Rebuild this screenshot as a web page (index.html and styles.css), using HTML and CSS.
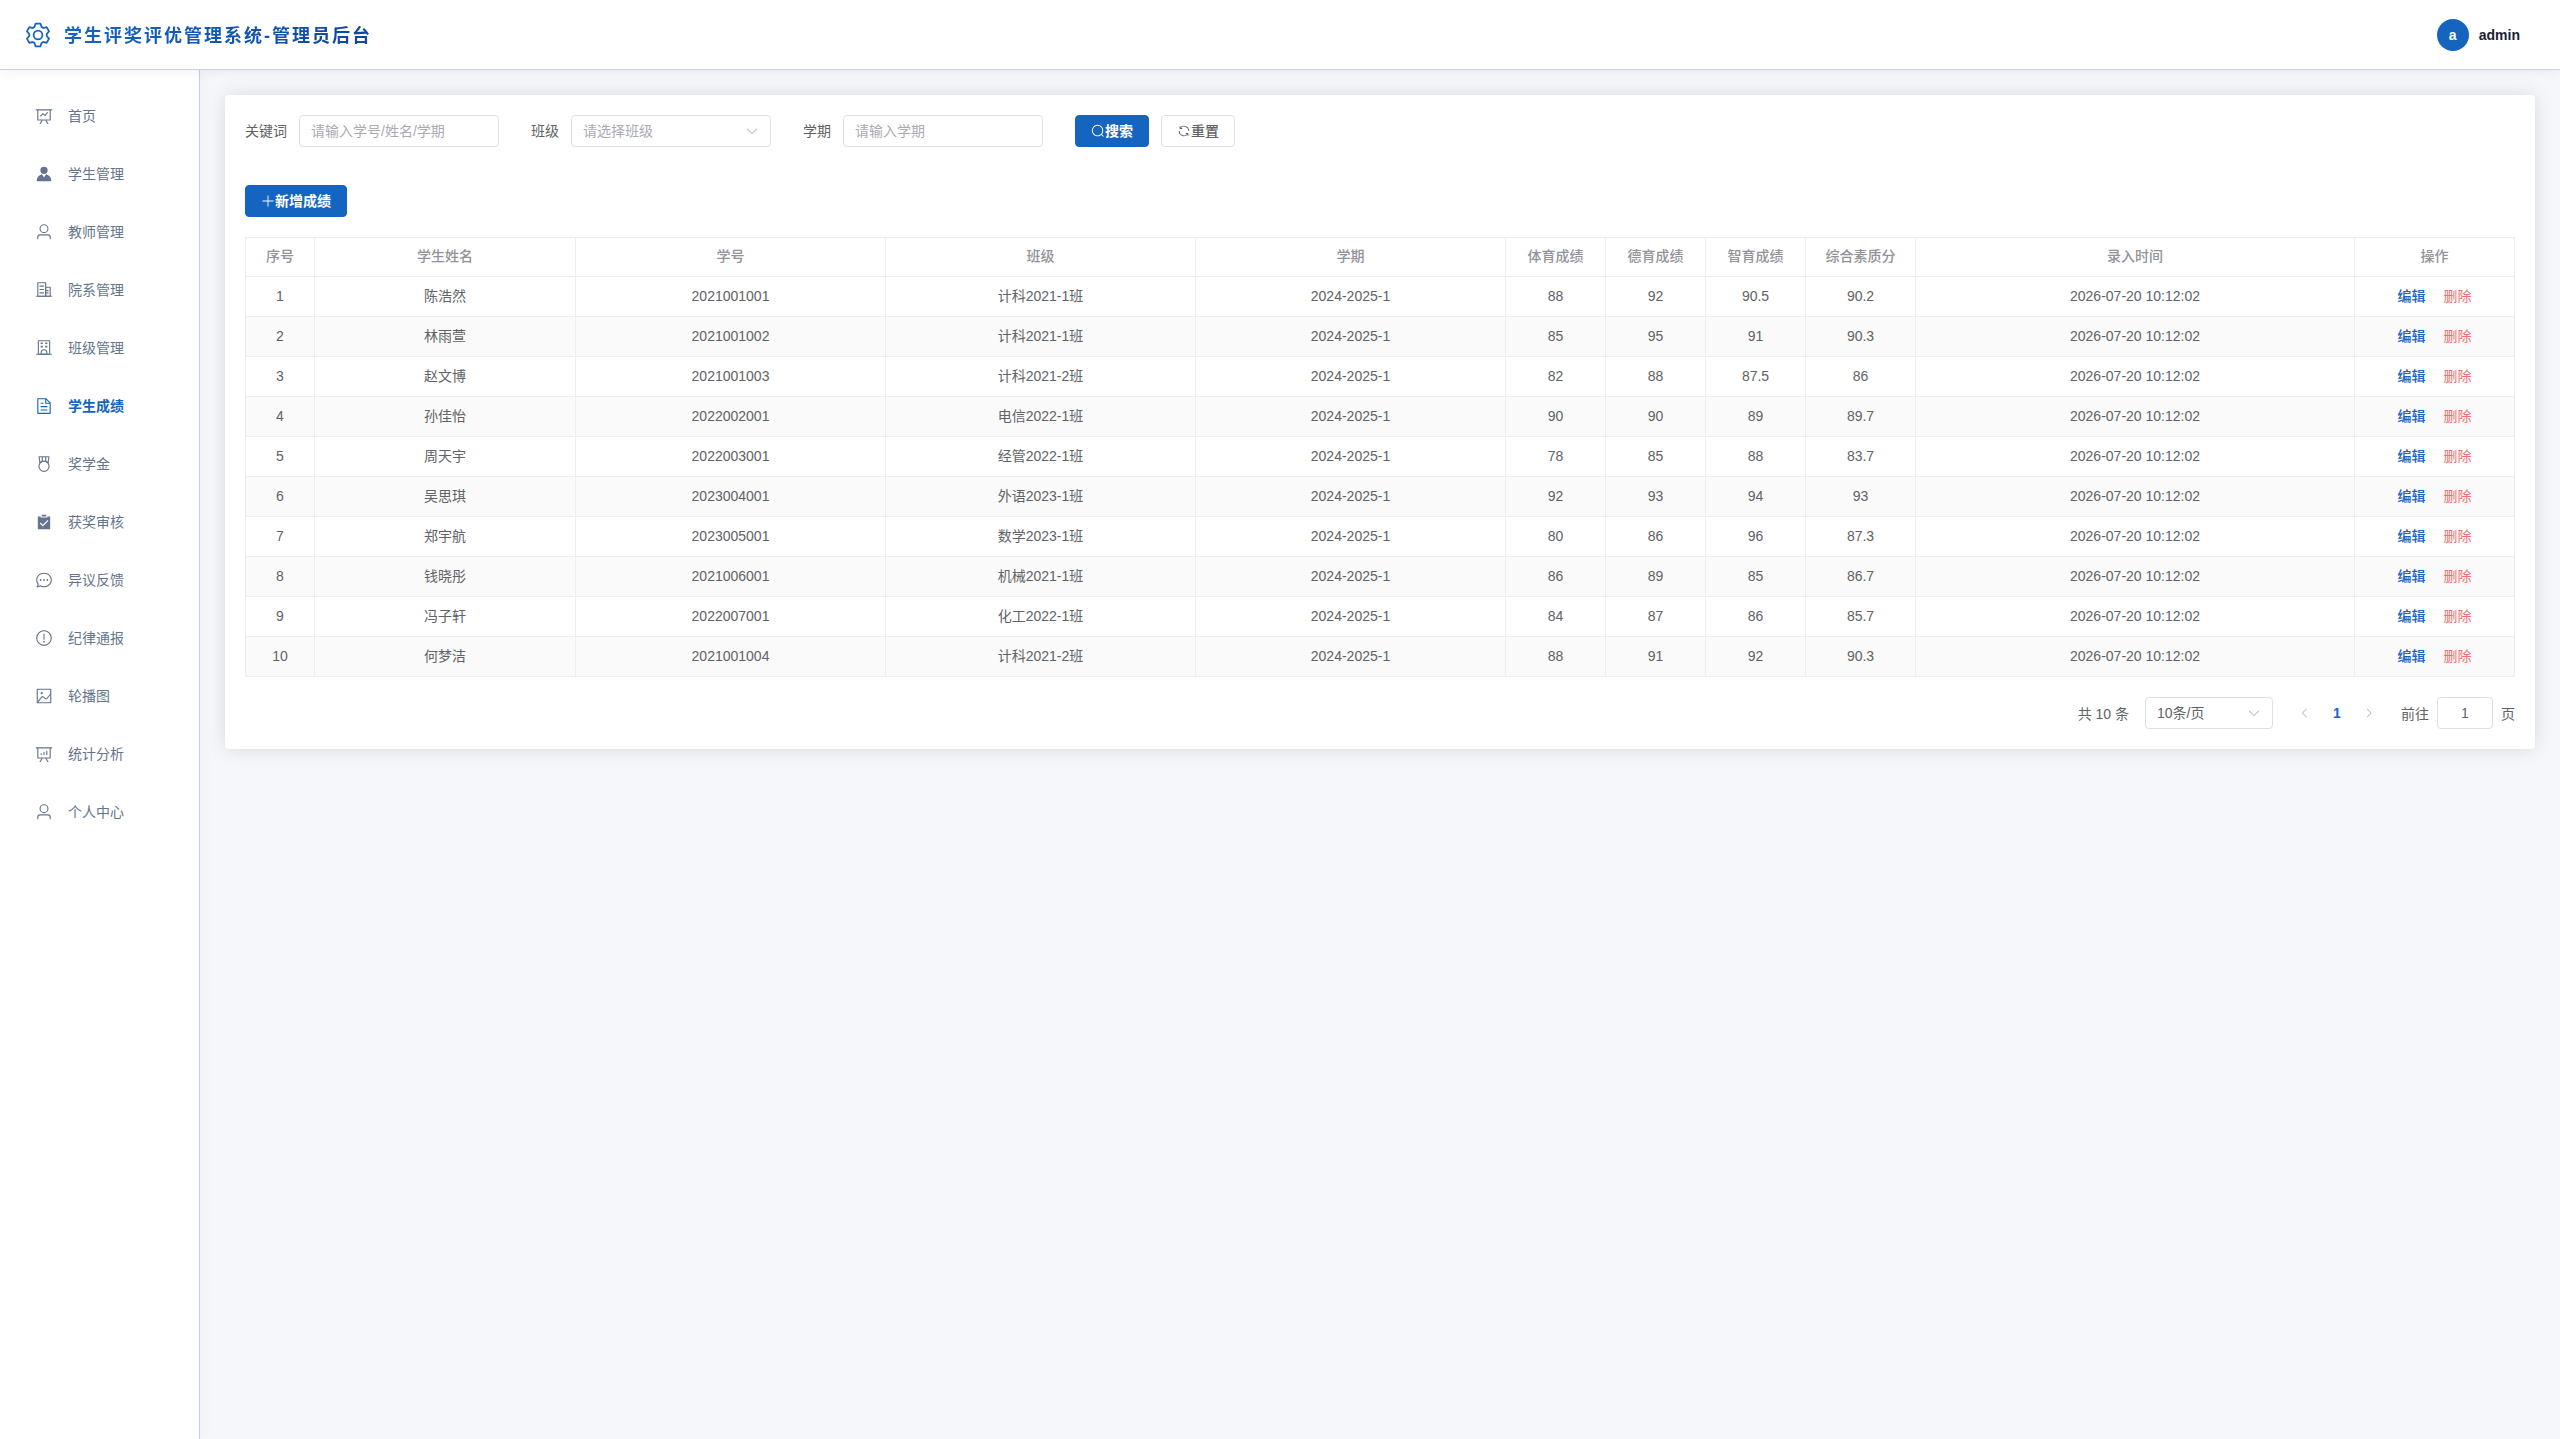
FILE: index.html
```html
<!DOCTYPE html>
<html lang="zh-CN">
<head>
<meta charset="UTF-8">
<title>学生评奖评优管理系统</title>
<link rel="stylesheet" href="styles.css">
</head>
<body>
<header class="header">
  <div class="brand">
    <svg class="brand-icon" viewBox="0 0 1024 1024"><path d="M600.704 64a32 32 0 0 1 30.464 22.208l35.2 109.376c14.784 7.232 28.928 15.36 42.432 24.512l112.384-24.192a32 32 0 0 1 34.432 15.36L944.32 364.8a32 32 0 0 1-4.032 37.504l-77.12 85.12a357.12 357.12 0 0 1 0 49.024l77.12 85.248a32 32 0 0 1 4.032 37.504l-88.704 153.6a32 32 0 0 1-34.432 15.296L708.8 803.904c-13.44 9.088-27.648 17.28-42.368 24.512l-35.264 109.376A32 32 0 0 1 600.704 960H423.296a32 32 0 0 1-30.464-22.208L357.696 828.48a351.616 351.616 0 0 1-42.56-24.64l-112.32 24.256a32 32 0 0 1-34.432-15.36L79.68 659.2a32 32 0 0 1 4.032-37.504l77.12-85.248a357.12 357.12 0 0 1 0-48.896l-77.12-85.248A32 32 0 0 1 79.68 364.8l88.704-153.6a32 32 0 0 1 34.432-15.296l112.32 24.256c13.568-9.152 27.776-17.408 42.56-24.64l35.2-109.312A32 32 0 0 1 423.232 64H600.64zm-23.424 64H446.72l-36.352 113.088-24.512 11.968a294.113 294.113 0 0 0-34.816 20.096l-22.656 15.36-116.224-25.088-65.28 113.152 79.68 88.192-1.92 27.136a293.12 293.12 0 0 0 0 40.192l1.92 27.136-79.808 88.192 65.344 113.152 116.224-25.024 22.656 15.296a294.113 294.113 0 0 0 34.816 20.096l24.512 11.968L446.72 896h130.688l36.48-113.152 24.448-11.904a288.282 288.282 0 0 0 34.752-20.096l22.592-15.296 116.288 25.024 65.28-113.152-79.744-88.192 1.92-27.136a293.12 293.12 0 0 0 0-40.256l-1.92-27.136 79.808-88.128-65.344-113.152-116.288 24.96-22.592-15.232a287.616 287.616 0 0 0-34.752-20.096l-24.448-11.904L577.344 128zM512 320a192 192 0 1 1 0 384 192 192 0 0 1 0-384m0 64a128 128 0 1 0 0 256 128 128 0 0 0 0-256"/></svg>
    <h1 class="brand-title">学生评奖评优管理系统-管理员后台</h1>
  </div>
  <div class="account">
    <span class="avatar">a</span>
    <span class="account-name">admin</span>
  </div>
</header>
<div class="layout">
  <aside class="sidebar">
    <nav class="menu">
      <a class="menu-item"><svg class="menu-icon" viewBox="0 0 1024 1024"><path d="M359.168 768H160a32 32 0 0 1-32-32V192H64a32 32 0 0 1 0-64h896a32 32 0 1 1 0 64h-64v544a32 32 0 0 1-32 32H665.216l110.848 192h-73.856L591.36 768H433.024L322.176 960H248.32zM832 192H192v512h640zM342.656 534.656a32 32 0 1 1-45.312-45.312L444.992 341.76l125.44 94.08L679.04 300.032a32 32 0 1 1 49.92 39.936L581.632 524.224 451.008 426.24 342.656 534.592z"/></svg><span>首页</span></a>
      <a class="menu-item"><svg class="menu-icon" viewBox="0 0 1024 1024"><path d="M628.736 528.896A416 416 0 0 1 928 928H96a415.872 415.872 0 0 1 299.264-399.104L512 704zM720 304a208 208 0 1 1-416 0 208 208 0 0 1 416 0"/></svg><span>学生管理</span></a>
      <a class="menu-item"><svg class="menu-icon" viewBox="0 0 1024 1024"><path d="M512 512a192 192 0 1 0 0-384 192 192 0 0 0 0 384m0 64a256 256 0 1 1 0-512 256 256 0 0 1 0 512m320 320v-96a96 96 0 0 0-96-96H288a96 96 0 0 0-96 96v96a32 32 0 1 1-64 0v-96a160 160 0 0 1 160-160h448a160 160 0 0 1 160 160v96a32 32 0 1 1-64 0"/></svg><span>教师管理</span></a>
      <a class="menu-item"><svg class="menu-icon" viewBox="0 0 1024 1024"><path d="M192 128v704h384V128zm-32-64h448a32 32 0 0 1 32 32v768a32 32 0 0 1-32 32H160a32 32 0 0 1-32-32V96a32 32 0 0 1 32-32"/><path d="M256 256h256v64H256zm0 192h256v64H256zm0 192h256v64H256zm384-128h128v64H640zm0 128h128v64H640zM64 832h896v64H64z"/><path d="M640 384v448h192V384zm-32-64h256a32 32 0 0 1 32 32v512a32 32 0 0 1-32 32H608a32 32 0 0 1-32-32V352a32 32 0 0 1 32-32"/></svg><span>院系管理</span></a>
      <a class="menu-item"><svg class="menu-icon" viewBox="0 0 1024 1024"><path d="M224 128v704h576V128zm-32-64h640a32 32 0 0 1 32 32v768a32 32 0 0 1-32 32H192a32 32 0 0 1-32-32V96a32 32 0 0 1 32-32"/><path d="M64 832h896v64H64zm256-640h128v96H320z"/><path d="M384 832h256v-64a128 128 0 1 0-256 0zm128-256a192 192 0 0 1 192 192v128H320V768a192 192 0 0 1 192-192M320 384h128v96H320zm256-192h128v96H576zm0 192h128v96H576z"/></svg><span>班级管理</span></a>
      <a class="menu-item active"><svg class="menu-icon" viewBox="0 0 1024 1024"><path d="M832 384H576V128H192v768h640zm-26.496-64L640 154.496V320zM160 64h480l256 256v608a32 32 0 0 1-32 32H160a32 32 0 0 1-32-32V96a32 32 0 0 1 32-32m160 448h384v64H320zm0-192h160v64H320zm0 384h384v64H320z"/></svg><span>学生成绩</span></a>
      <a class="menu-item"><svg class="menu-icon" viewBox="0 0 1024 1024"><path d="M512 896a256 256 0 1 0 0-512 256 256 0 0 0 0 512m0 64a320 320 0 1 1 0-640 320 320 0 0 1 0 640"/><path d="M576 128H448v200a286.72 286.72 0 0 1 64-8c19.52 0 40.832 2.688 64 8zm64 0v219.648c24.448 9.088 50.56 20.416 78.4 33.92L757.44 128zm-256 0H266.624l39.04 253.568c27.84-13.504 53.888-24.832 78.336-33.92V128zM229.312 64h565.376a32 32 0 0 1 31.616 36.864L768 480c-113.792-64-199.104-96-256-96-56.896 0-142.208 32-256 96l-58.304-379.136A32 32 0 0 1 229.312 64"/></svg><span>奖学金</span></a>
      <a class="menu-item"><svg class="menu-icon" viewBox="0 0 1024 1024"><path d="M704 192h160v736H160V192h160.064v64H704zM311.616 537.28l-45.312 45.248L447.36 763.52l316.8-316.8-45.312-45.184L447.36 673.024zM384 192V96h256v96z"/></svg><span>获奖审核</span></a>
      <a class="menu-item"><svg class="menu-icon" viewBox="0 0 1024 1024"><path d="m174.72 855.68 135.296-45.12 23.68 11.84C388.096 849.536 448.576 864 512 864c211.84 0 384-166.784 384-352S723.84 160 512 160 128 326.784 128 512c0 69.12 24.96 139.264 70.848 199.232l22.08 28.8-46.272 115.584zm-45.248 82.56A32 32 0 0 1 89.6 896l58.368-145.92C94.72 680.32 64 596.864 64 512 64 299.904 256 96 512 96s448 203.904 448 416-192 416-448 416a461.056 461.056 0 0 1-206.912-48.384l-175.616 58.56z"/><path d="M512 563.2a51.2 51.2 0 1 1 0-102.4 51.2 51.2 0 0 1 0 102.4m192 0a51.2 51.2 0 1 1 0-102.4 51.2 51.2 0 0 1 0 102.4m-384 0a51.2 51.2 0 1 1 0-102.4 51.2 51.2 0 0 1 0 102.4"/></svg><span>异议反馈</span></a>
      <a class="menu-item"><svg class="menu-icon" viewBox="0 0 1024 1024"><path d="M512 64a448 448 0 1 1 0 896 448 448 0 0 1 0-896m0 832a384 384 0 0 0 0-768 384 384 0 0 0 0 768m48-176a48 48 0 1 1-96 0 48 48 0 0 1 96 0m-48-464a32 32 0 0 1 32 32v288a32 32 0 0 1-64 0V288a32 32 0 0 1 32-32"/></svg><span>纪律通报</span></a>
      <a class="menu-item"><svg class="menu-icon" viewBox="0 0 1024 1024"><path d="M160 160v704h704V160zm-32-64h768a32 32 0 0 1 32 32v768a32 32 0 0 1-32 32H128a32 32 0 0 1-32-32V128a32 32 0 0 1 32-32"/><path d="M384 288q64 0 64 64t-64 64q-64 0-64-64t64-64M185.408 876.992l-50.816-38.912L350.72 556.032a96 96 0 0 1 134.592-17.856l1.856 1.472 122.88 99.136a32 32 0 0 0 44.992-4.864l216-269.888 49.92 39.936-215.808 269.824-.256.32a96 96 0 0 1-135.04 14.464l-122.88-99.072-.64-.512a32 32 0 0 0-44.8 5.952z"/></svg><span>轮播图</span></a>
      <a class="menu-item"><svg class="menu-icon" viewBox="0 0 1024 1024"><path d="m665.216 768 110.848 192h-73.856L591.36 768H433.024L322.176 960H248.32l110.848-192H160a32 32 0 0 1-32-32V192H64a32 32 0 0 1 0-64h896a32 32 0 1 1 0 64h-64v544a32 32 0 0 1-32 32zM832 192H192v512h640zM352 448a32 32 0 0 1 32 32v64a32 32 0 0 1-64 0v-64a32 32 0 0 1 32-32m160-64a32 32 0 0 1 32 32v128a32 32 0 0 1-64 0V416a32 32 0 0 1 32-32m160-64a32 32 0 0 1 32 32v192a32 32 0 1 1-64 0V352a32 32 0 0 1 32-32"/></svg><span>统计分析</span></a>
      <a class="menu-item"><svg class="menu-icon" viewBox="0 0 1024 1024"><path d="M512 512a192 192 0 1 0 0-384 192 192 0 0 0 0 384m0 64a256 256 0 1 1 0-512 256 256 0 0 1 0 512m320 320v-96a96 96 0 0 0-96-96H288a96 96 0 0 0-96 96v96a32 32 0 1 1-64 0v-96a160 160 0 0 1 160-160h448a160 160 0 0 1 160 160v96a32 32 0 1 1-64 0"/></svg><span>个人中心</span></a>
    </nav>
  </aside>
  <main class="main">
    <section class="card">
      <form class="filters">
        <label class="field">关键词<span class="control">请输入学号/姓名/学期</span></label>
        <label class="field">班级<span class="control">请选择班级<svg class="icon" viewBox="0 0 1024 1024"><path d="M831.872 340.864 512 652.672 192.128 340.864a30.592 30.592 0 0 0-42.752 0 29.12 29.12 0 0 0 0 41.6L489.664 714.24a32 32 0 0 0 44.672 0l340.288-331.712a29.12 29.12 0 0 0 0-41.728 30.592 30.592 0 0 0-42.752 0z"/></svg></span></label>
        <label class="field">学期<span class="control">请输入学期</span></label>
        <div class="actions">
          <button type="button" class="btn primary"><svg class="icon" viewBox="0 0 1024 1024"><path d="m795.904 750.72 124.992 124.928a32 32 0 0 1-45.248 45.248L750.656 795.904a416 416 0 1 1 45.248-45.248zM480 832a352 352 0 1 0 0-704 352 352 0 0 0 0 704"/></svg>搜索</button>
          <button type="button" class="btn"><svg class="icon" viewBox="0 0 1024 1024"><path d="M771.776 794.88A384 384 0 0 1 128 512h64a320 320 0 0 0 555.712 216.448H654.72a32 32 0 1 1 0-64h149.056a32 32 0 0 1 32 32v148.928a32 32 0 1 1-64 0v-50.56zM276.288 295.616h92.992a32 32 0 0 1 0 64H220.16a32 32 0 0 1-32-32V178.56a32 32 0 0 1 64 0v50.56A384 384 0 0 1 896.128 512h-64a320 320 0 0 0-555.776-216.384z"/></svg>重置</button>
        </div>
      </form>
      <div class="toolbar">
        <button type="button" class="btn primary"><svg class="icon" viewBox="0 0 1024 1024"><path d="M480 480V128a32 32 0 0 1 64 0v352h352a32 32 0 1 1 0 64H544v352a32 32 0 1 1-64 0V544H128a32 32 0 0 1 0-64z"/></svg>新增成绩</button>
      </div>
      <table class="table">
        <colgroup><col class="c-index"><col class="c-name"><col class="c-wide"><col class="c-wide"><col class="c-wide"><col class="c-score"><col class="c-score"><col class="c-score"><col class="c-total"><col class="c-time"><col class="c-ops"></colgroup>
        <thead><tr><th>序号</th><th>学生姓名</th><th>学号</th><th>班级</th><th>学期</th><th>体育成绩</th><th>德育成绩</th><th>智育成绩</th><th>综合素质分</th><th>录入时间</th><th>操作</th></tr></thead>
        <tbody>
          <tr><td>1</td><td>陈浩然</td><td>2021001001</td><td>计科2021-1班</td><td>2024-2025-1</td><td>88</td><td>92</td><td>90.5</td><td>90.2</td><td>2026-07-20 10:12:02</td><td><a class="link">编辑</a><a class="link danger">删除</a></td></tr>
          <tr><td>2</td><td>林雨萱</td><td>2021001002</td><td>计科2021-1班</td><td>2024-2025-1</td><td>85</td><td>95</td><td>91</td><td>90.3</td><td>2026-07-20 10:12:02</td><td><a class="link">编辑</a><a class="link danger">删除</a></td></tr>
          <tr><td>3</td><td>赵文博</td><td>2021001003</td><td>计科2021-2班</td><td>2024-2025-1</td><td>82</td><td>88</td><td>87.5</td><td>86</td><td>2026-07-20 10:12:02</td><td><a class="link">编辑</a><a class="link danger">删除</a></td></tr>
          <tr><td>4</td><td>孙佳怡</td><td>2022002001</td><td>电信2022-1班</td><td>2024-2025-1</td><td>90</td><td>90</td><td>89</td><td>89.7</td><td>2026-07-20 10:12:02</td><td><a class="link">编辑</a><a class="link danger">删除</a></td></tr>
          <tr><td>5</td><td>周天宇</td><td>2022003001</td><td>经管2022-1班</td><td>2024-2025-1</td><td>78</td><td>85</td><td>88</td><td>83.7</td><td>2026-07-20 10:12:02</td><td><a class="link">编辑</a><a class="link danger">删除</a></td></tr>
          <tr><td>6</td><td>吴思琪</td><td>2023004001</td><td>外语2023-1班</td><td>2024-2025-1</td><td>92</td><td>93</td><td>94</td><td>93</td><td>2026-07-20 10:12:02</td><td><a class="link">编辑</a><a class="link danger">删除</a></td></tr>
          <tr><td>7</td><td>郑宇航</td><td>2023005001</td><td>数学2023-1班</td><td>2024-2025-1</td><td>80</td><td>86</td><td>96</td><td>87.3</td><td>2026-07-20 10:12:02</td><td><a class="link">编辑</a><a class="link danger">删除</a></td></tr>
          <tr><td>8</td><td>钱晓彤</td><td>2021006001</td><td>机械2021-1班</td><td>2024-2025-1</td><td>86</td><td>89</td><td>85</td><td>86.7</td><td>2026-07-20 10:12:02</td><td><a class="link">编辑</a><a class="link danger">删除</a></td></tr>
          <tr><td>9</td><td>冯子轩</td><td>2022007001</td><td>化工2022-1班</td><td>2024-2025-1</td><td>84</td><td>87</td><td>86</td><td>85.7</td><td>2026-07-20 10:12:02</td><td><a class="link">编辑</a><a class="link danger">删除</a></td></tr>
          <tr><td>10</td><td>何梦洁</td><td>2021001004</td><td>计科2021-2班</td><td>2024-2025-1</td><td>88</td><td>91</td><td>92</td><td>90.3</td><td>2026-07-20 10:12:02</td><td><a class="link">编辑</a><a class="link danger">删除</a></td></tr>
        </tbody>
      </table>
      <footer class="pagination">
        <span class="total">共 10 条</span>
        <span class="control page-size">10条/页<svg class="icon" viewBox="0 0 1024 1024"><path d="M831.872 340.864 512 652.672 192.128 340.864a30.592 30.592 0 0 0-42.752 0 29.12 29.12 0 0 0 0 41.6L489.664 714.24a32 32 0 0 0 44.672 0l340.288-331.712a29.12 29.12 0 0 0 0-41.728 30.592 30.592 0 0 0-42.752 0z"/></svg></span>
        <div class="pager">
          <span class="page"><svg class="arrow" viewBox="0 0 1024 1024"><path d="M609.408 149.376 277.76 489.6a32 32 0 0 0 0 44.672l331.648 340.352a29.12 29.12 0 0 0 41.728 0 30.592 30.592 0 0 0 0-42.752L339.264 511.936l311.872-319.872a30.592 30.592 0 0 0 0-42.688 29.12 29.12 0 0 0-41.728 0"/></svg></span>
          <span class="page current">1</span>
          <span class="page"><svg class="arrow" viewBox="0 0 1024 1024"><path d="M340.864 149.312a30.592 30.592 0 0 0 0 42.752L652.736 512 340.864 831.872a30.592 30.592 0 0 0 0 42.752 29.12 29.12 0 0 0 41.728 0L714.24 534.336a32 32 0 0 0 0-44.672L382.592 149.376a29.12 29.12 0 0 0-41.728 0z"/></svg></span>
        </div>
        <div class="jump"><span class="jump-text">前往</span><span class="control page-input">1</span><span class="jump-text">页</span></div>
      </footer>
    </section>
  </main>
</div>
</body>
</html>
```
FILE: styles.css
```css
* { box-sizing: border-box; }
body {
  margin: 0;
  height: 100vh;
  display: flex;
  flex-direction: column;
  overflow: hidden;
  font: 14px/20px "Liberation Sans", "Noto Sans CJK SC", sans-serif;
  color: #606266;
  background: #f5f7fb;
}
svg { display: block; fill: currentColor; flex: none; }
.header {
  position: relative;
  z-index: 2;
  flex: none;
  height: 70px;
  padding: 0 40px 0 24px;
  display: flex;
  align-items: center;
  justify-content: space-between;
  background: #fff;
  border-bottom: 1px solid #c8d3e1;
  box-shadow: 0 2px 12px rgba(0, 0, 0, .06);
}
.brand { display: flex; align-items: center; gap: 12px; }
.brand-icon { width: 28px; height: 28px; color: #1565c0; }
.brand-title {
  margin: 0;
  padding-top: 3px;
  font-size: 18px;
  line-height: 28px;
  font-weight: 700;
  letter-spacing: 2px;
  color: transparent;
  background: linear-gradient(90deg, #1565c0, #0d47a1);
  background-clip: text;
  -webkit-background-clip: text;
}
.account { display: flex; align-items: center; gap: 10px; }
.avatar {
  width: 32px;
  height: 32px;
  border-radius: 50%;
  background: #1565c0;
  color: #fff;
  font-weight: 700;
  line-height: 32px;
  text-align: center;
}
.account-name { font-weight: 700; color: #1a2236; }
.layout { flex: 1; display: flex; min-height: 0; }
.sidebar {
  position: relative;
  z-index: 1;
  flex: none;
  width: 200px;
  padding-top: 17px;
  background: #fff;
  border-right: 1px solid #c5d0de;
  box-shadow: 2px 0 12px rgba(0, 0, 0, .04);
}
.menu { display: flex; flex-direction: column; }
.menu-item {
  height: 58px;
  padding-left: 35px;
  display: flex;
  align-items: center;
  gap: 15px;
  color: #64748b;
}
.menu-item.active { color: #1565c0; font-weight: 700; }
.menu-icon { width: 18px; height: 18px; }
.main { flex: 1; min-width: 0; padding: 25px; }
.card {
  padding: 20px;
  background: #fff;
  border-radius: 4px;
  box-shadow: 0 0 20px rgba(0, 0, 0, .12);
}
.filters { display: flex; gap: 32px; }
.field { display: flex; align-items: center; gap: 12px; }
.control {
  width: 200px;
  height: 32px;
  padding: 0 11px;
  display: flex;
  align-items: center;
  justify-content: space-between;
  border: 1px solid #dcdfe6;
  border-radius: 4px;
  background: #fff;
  color: #a8abb2;
}
.icon { width: 14px; height: 14px; }
.actions { display: flex; gap: 12px; }
.btn {
  height: 32px;
  padding: 0 15px;
  display: flex;
  align-items: center;
  border: 1px solid #dcdfe6;
  border-radius: 4px;
  background: #fff;
  color: #606266;
  font: inherit;
  font-weight: 500;
}
.btn.primary { background: #1565c0; border-color: #1565c0; color: #fff; font-weight: 700; }
.toolbar { display: flex; margin: 38px 0 20px; }
.table {
  width: 100%;
  table-layout: fixed;
  border-collapse: separate;
  border-spacing: 0;
  text-align: center;
}
.c-index { width: 70px; }
.c-name { width: 261px; }
.c-wide { width: 310px; }
.c-score { width: 100px; }
.c-total { width: 110px; }
.c-time { width: 439px; }
.c-ops { width: 160px; }
.table th, .table td {
  height: 40px;
  padding: 0 0 2px;
  border: 0 solid #ebeef5;
  border-width: 0 1px 1px 0;
}
.table th { border-top-width: 1px; color: #909399; font-weight: 500; }
.table th:first-child, .table td:first-child { border-left-width: 1px; }
.table tbody tr:nth-child(even) { background: #fafafa; }
.link { color: #1565c0; font-weight: 500; }
.link.danger { margin-left: 18px; color: #f56c6c; font-weight: 400; }
.pagination { display: flex; align-items: center; justify-content: flex-end; margin-top: 20px; }
.pagination .control { color: #606266; }
.pagination .control .icon { color: #a8abb2; }
.total { margin-right: 16px; padding-top: 1px; }
.page-size { width: 128px; }
.pager { display: flex; margin: 0 16px; }
.page { width: 32px; height: 32px; display: flex; align-items: center; justify-content: center; color: #a8abb2; }
.page.current { color: #1565c0; font-weight: 700; }
.arrow { width: 12px; height: 12px; }
.jump { display: flex; align-items: center; gap: 8px; }
.jump-text { padding-top: 1px; }
.page-input { width: 56px; justify-content: center; }
```
